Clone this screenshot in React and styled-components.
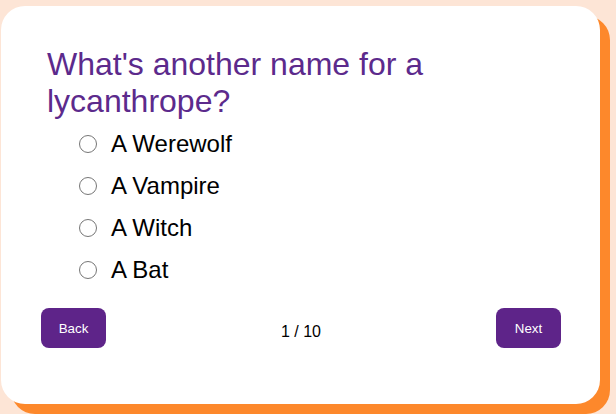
import React from "react";
import styled, { createGlobalStyle } from "styled-components";

const Global = createGlobalStyle`
  html, body { margin: 0; padding: 0; }
  body {
    background: #fde5d6;
    font-family: "Liberation Sans", Arial, sans-serif;
    width: 616px;
    height: 414px;
    overflow: hidden;
  }
`;

const Card = styled.div`
  box-sizing: border-box;
  margin: 6px 0 0 1px;
  width: 599px;
  height: 398px;
  background: #ffffff;
  border-radius: 24px;
  box-shadow: 10px 10px 0 #fd882b;
  padding: 40px 39px 0 40px;
  display: flex;
  flex-direction: column;
`;

const Title = styled.h1`
  margin: 0 0 0 6px;
  font-size: 32px;
  font-weight: normal;
  line-height: 37px;
  color: #5c2a8c;
`;

const Options = styled.div`
  margin-top: 3px;
  padding-left: 38px;
  display: flex;
  flex-direction: column;
`;

const Option = styled.label`
  display: flex;
  align-items: center;
  gap: 14px;
  height: 42px;
  font-size: 24px;
  color: #000;
  cursor: pointer;
`;

const Radio = styled.input`
  appearance: none;
  margin: 0;
  width: 18px;
  height: 18px;
  border: 1px solid #767676;
  border-radius: 50%;
  background: #fff;
  flex: none;
`;

const Footer = styled.div`
  margin-top: 17px;
  display: flex;
  align-items: center;
  justify-content: space-between;
`;

const Button = styled.button`
  width: 65px;
  height: 40px;
  border: none;
  border-radius: 8px;
  background: #5e2489;
  color: #fff;
  font-family: "Liberation Sans", Arial, sans-serif;
  font-size: 13.33px;
  padding: 0;
  cursor: pointer;
`;

const Counter = styled.span`
  font-size: 16px;
  color: #000;
  padding-top: 8px;
`;

const options = ["A Werewolf", "A Vampire", "A Witch", "A Bat"];

export default function App() {
  return (
    <>
      <Global />
      <Card>
        <Title>What's another name for a lycanthrope?</Title>
        <Options>
          {options.map((o) => (
            <Option key={o}>
              <Radio type="radio" name="answer" />
              {o}
            </Option>
          ))}
        </Options>
        <Footer>
          <Button>Back</Button>
          <Counter>1 / 10</Counter>
          <Button>Next</Button>
        </Footer>
      </Card>
    </>
  );
}
